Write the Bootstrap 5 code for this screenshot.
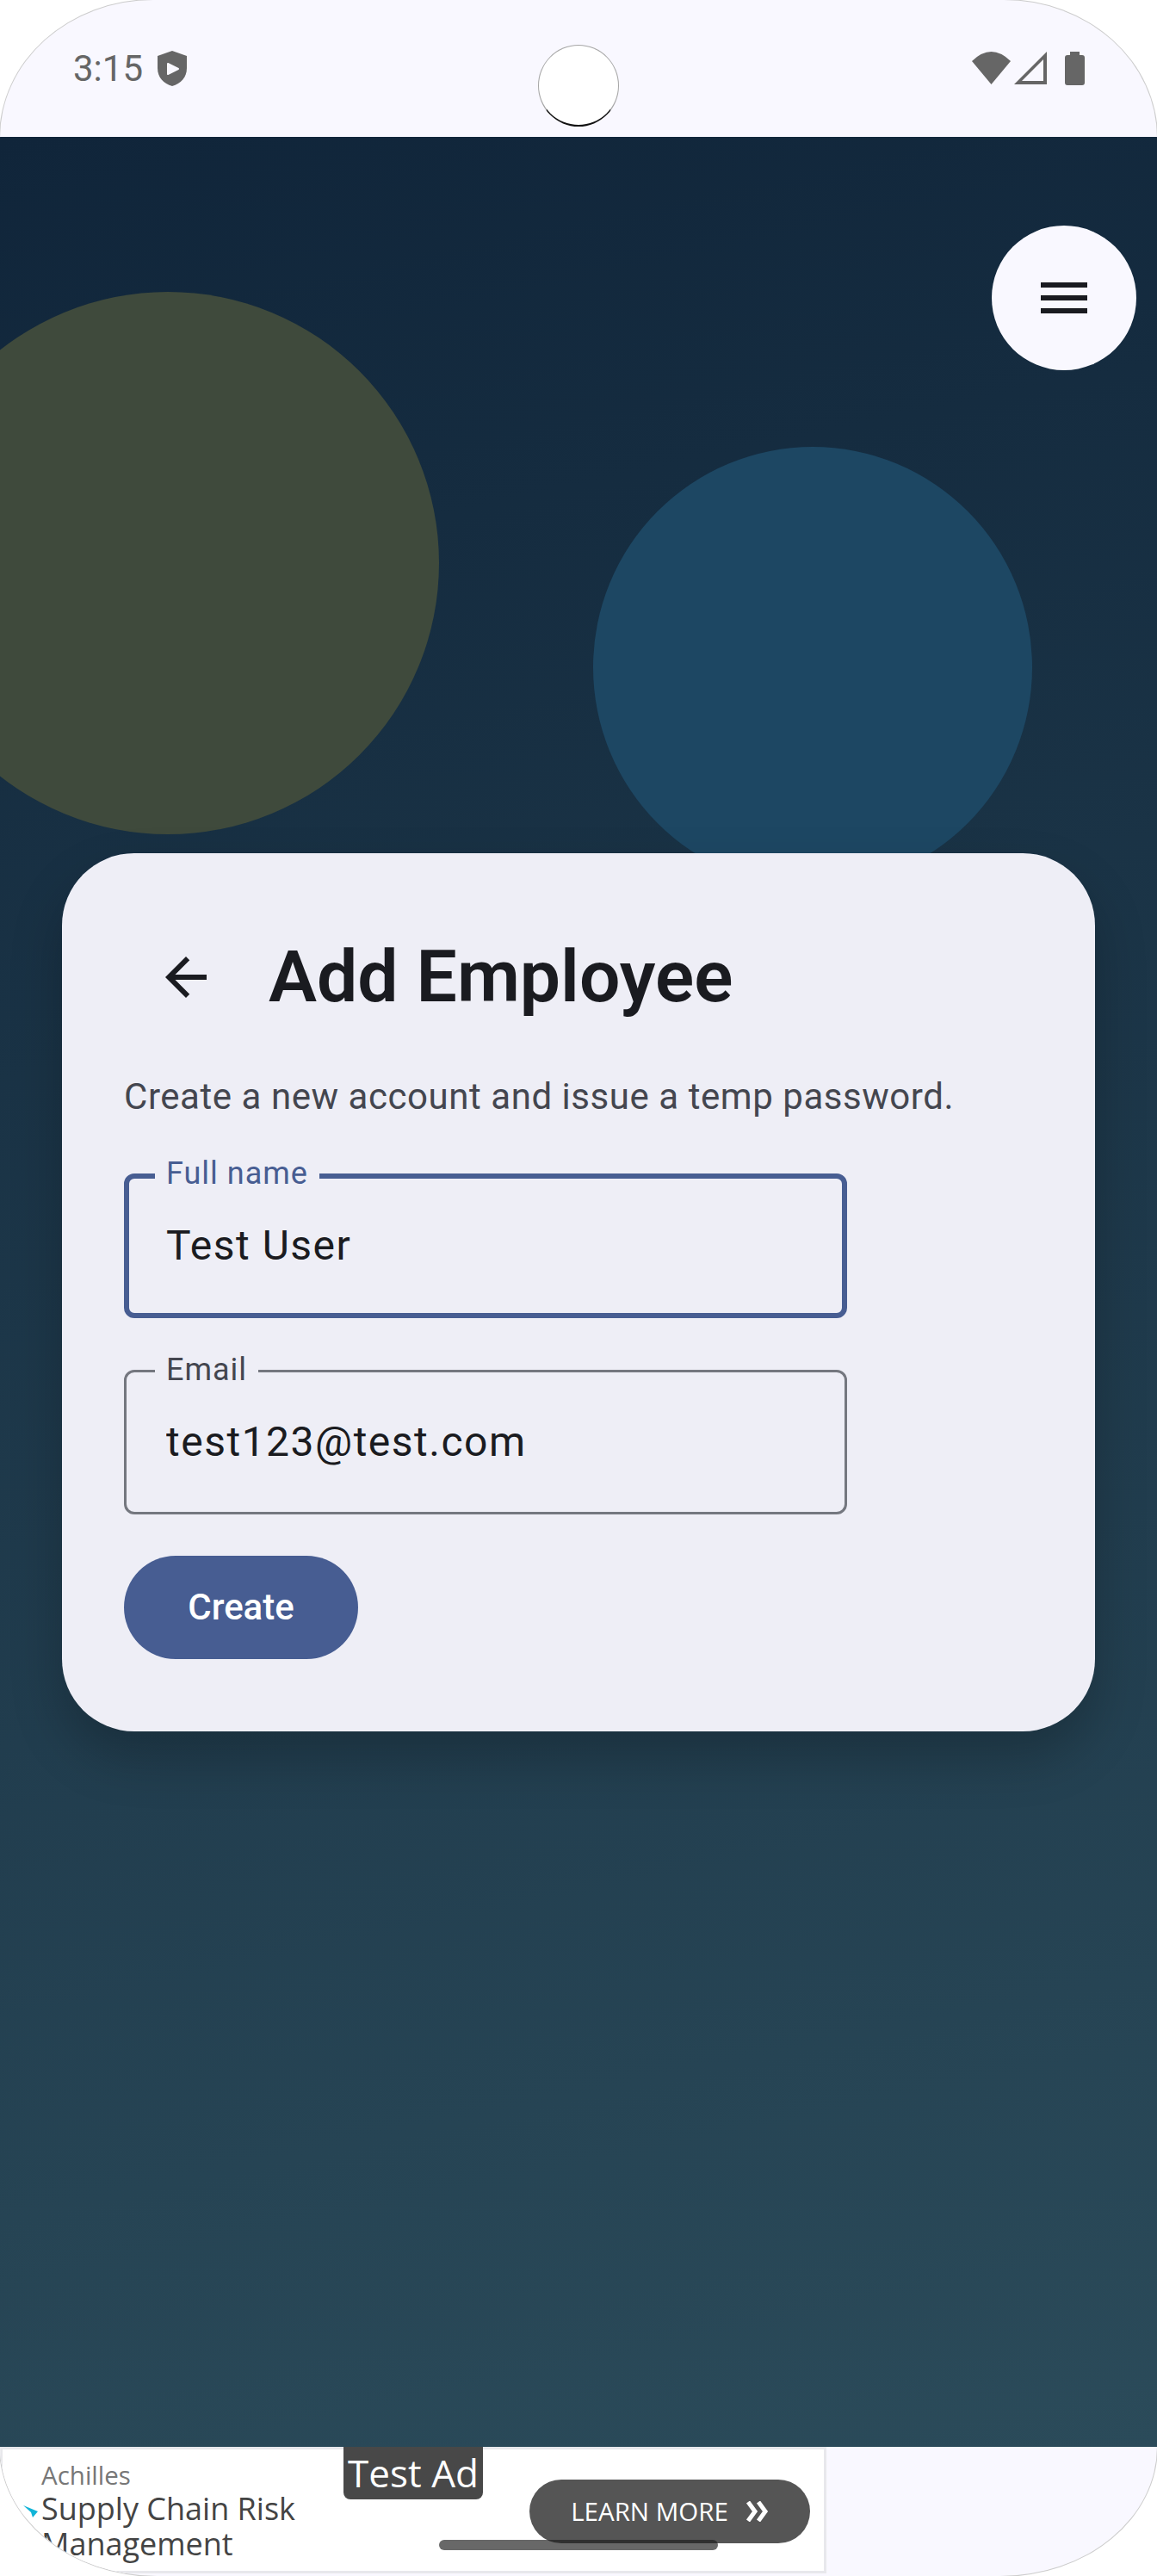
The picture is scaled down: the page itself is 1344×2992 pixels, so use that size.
<!DOCTYPE html>
<html lang="en">
<head>
  <meta charset="UTF-8">
  <meta name="viewport" content="width=device-width, initial-scale=1.0">
  <title>Add Employee</title>
  <link href="https://cdn.jsdelivr.net/npm/bootstrap@5.3.0/dist/css/bootstrap.min.css" rel="stylesheet">
  <style>
    body {
      margin: 0;
      width: 1344px;
      height: 2992px;
      background: #fff;
      font-family: Roboto, sans-serif;
      overflow: hidden;
    }

    .device {
      position: relative;
      width: 1344px;
      height: 2992px;
      overflow: hidden;
      background: #f9f8ff;
      border-radius: 178px 178px 182px 182px / 160px 160px 150px 150px;
      box-shadow: 0 0 0 1px rgba(0, 0, 0, .2);
    }

    .status-row {
      height: 159px;
      padding: 0 84px 0 85px;
      color: #666;
    }

    .status-left { gap: 17px; }
    .clock { font-size: 42px; line-height: 1; }

    .camera-hole {
      position: absolute;
      left: 625px;
      top: 52px;
      width: 94px;
      height: 95px;
      border-radius: 50%;
      background: #fff;
      border: 1px solid rgba(0, 0, 0, .35);
      border-bottom: 2px solid #111;
    }

    .hero {
      position: relative;
      height: 2683px;
      overflow: hidden;
      background: linear-gradient(168deg, #10253a, #2b4b5a);
    }

    .blob { position: absolute; border-radius: 50%; }
    .blob-olive { left: -120px; top: 180px; width: 630px; height: 630px; background: #3f4a3c; }
    .blob-blue { left: 689px; top: 360px; width: 510px; height: 512px; background: #1d4763; }

    .menu-fab {
      position: absolute;
      left: 1152px;
      top: 103px;
      width: 168px;
      height: 168px;
      border: 0;
      background: #f9f8ff;
      gap: 9px;
    }

    .menu-fab span { display: block; width: 54px; height: 6px; background: #1a1b20; }

    .form-sheet {
      width: 1200px;
      height: 1020px;
      padding: 72px;
      border: 0;
      border-radius: 84px;
      background: #eeeef6;
      box-shadow: 0 30px 60px rgba(0, 0, 0, .22);
    }

    .back-btn { width: 144px; height: 144px; padding: 0; border: 0; }
    .sheet-title { font-size: 84px; font-weight: 600; color: #1a1b20; margin: 0 0 0 24px; line-height: 144px; }
    .sheet-sub { font-size: 42px; letter-spacing: .55px; color: #44464f; margin: 37px 0 59px; line-height: 60px; }

    .field { position: relative; width: 840px; height: 168px; margin-bottom: 60px; }
    .field-label {
      position: absolute;
      left: 36px;
      top: -22px;
      padding: 0 13px;
      font-size: 36px;
      line-height: 44px;
      letter-spacing: 1px;
      background: #eeeef6;
      color: #44464f;
    }
    .field-input.form-control {
      height: 168px;
      padding: 0 46px;
      font-size: 48px;
      letter-spacing: 1.5px;
      color: #1a1b20;
      background: transparent;
      border: 3px solid #74777f;
      border-radius: 12px;
      box-shadow: none;
    }
    .field-active .field-label { color: #475d92; }
    .field-active .field-input.form-control { border: 6px solid #475d92; padding: 0 43px; }

    .create-btn {
      width: 272px;
      height: 120px;
      margin-top: -12px;
      padding: 0;
      border: 0;
      font-size: 42px;
      font-weight: 500;
      color: #fff;
      background: #475d92;
    }

    .ad-bar { height: 150px; }
    .ad-box {
      position: relative;
      width: 960px;
      height: 147px;
      background: #fff;
      border: 3px solid #e8e8ec;
      font-family: "Open Sans", sans-serif;
    }
    .ad-copy { padding: 12px 0 0 45px; width: 400px; }
    .ad-brand { font-size: 29.5px; line-height: 36px; color: #777; }
    .ad-head { font-size: 36px; line-height: 41px; color: #444; }
    .ad-tag {
      position: absolute;
      left: 396px;
      top: -3px;
      width: 162px;
      height: 61px;
      background: #484848;
      border-radius: 0 0 8px 8px;
      color: #fff;
      font-size: 44px;
      line-height: 60px;
      text-align: center;
      white-space: nowrap;
    }
    .ad-btn {
      position: absolute;
      left: 612px;
      top: 35px;
      width: 326px;
      height: 74px;
      gap: 20px;
      padding: 0;
      border: 0;
      font-size: 29.5px;
      color: #fff;
      background: #555;
    }
    .ad-mark { position: absolute; left: 24px; top: 65px; }

    .home-pill {
      position: absolute;
      left: 510px;
      top: 2950px;
      width: 324px;
      height: 12px;
      border-radius: 6px;
      background: rgba(30, 30, 30, .67);
    }
  </style>
</head>
<body>

  <div class="device d-flex flex-column">
    <div class="status-row d-flex justify-content-between align-items-center">
      <div class="status-left d-flex align-items-center">
        <span class="clock">3:15</span>
        <svg width="34" height="41" viewBox="0 0 34 41"><path fill="#666" d="M17 0 34 6V20C34 31 27 38 17 41 7 38 0 31 0 20V6Z"/><path fill="#f9f8ff" stroke="#f9f8ff" stroke-width="2" stroke-linejoin="round" d="M12 15 24 21 12 27Z"/></svg>
      </div>
      <div class="d-flex align-items-center gap-0">
        <svg width="45" height="39" viewBox="0 0 45 39"><path fill="#666" d="M0 11Q22.5-11 45 11L22.5 38Z"/></svg>
        <svg class="ms-1" width="38" height="39" viewBox="0 0 38 39"><path fill="#666" fill-rule="evenodd" d="M0 38 38 0V38ZM9 34H34V9Z"/></svg>
        <svg style="margin-left:21px" width="23" height="39" viewBox="0 0 23 39"><path fill="#666" d="M6 0H17V4H20Q23 4 23 7V36Q23 39 20 39H3Q0 39 0 36V7Q0 4 3 4H6Z"/></svg>
      </div>
    </div>
    <div class="camera-hole"></div>

    <div class="hero d-flex justify-content-center align-items-center">
      <div class="blob blob-olive"></div>
      <div class="blob blob-blue"></div>
      <button class="menu-fab btn rounded-circle d-flex flex-column justify-content-center align-items-center" type="button" aria-label="Menu">
        <span></span><span></span><span></span>
      </button>

      <div class="form-sheet card position-relative">
        <div class="d-flex align-items-center">
          <button class="back-btn btn d-flex justify-content-center align-items-center" type="button" aria-label="Back">
            <svg width="72" height="72" viewBox="0 0 24 24"><path fill="#1a1b20" d="M20 11H7.83l5.59-5.59L12 4l-8 8 8 8 1.41-1.41L7.83 13H20v-2z"/></svg>
          </button>
          <h1 class="sheet-title">Add Employee</h1>
        </div>
        <p class="sheet-sub">Create a new account and issue a temp password.</p>
        <div class="field field-active">
          <label class="field-label" for="fullName">Full name</label>
          <input id="fullName" class="field-input form-control" type="text" value="Test User">
        </div>
        <div class="field">
          <label class="field-label" for="email">Email</label>
          <input id="email" class="field-input form-control" type="text" value="test123@test.com">
        </div>
        <button class="create-btn btn rounded-pill" type="button">Create</button>
      </div>
    </div>

    <div class="ad-bar">
      <div class="ad-box d-flex">
        <svg class="ad-mark" width="20" height="16" viewBox="0 0 20 16"><path fill="#12b5d8" d="M0 0 17 7 11 14 9 8Z"/></svg>
        <div class="ad-copy">
          <div class="ad-brand">Achilles</div>
          <div class="ad-head">Supply Chain Risk Management</div>
        </div>
        <div class="ad-tag">Test Ad</div>
        <button class="ad-btn btn rounded-pill d-flex justify-content-center align-items-center" type="button">
          LEARN MORE
          <svg width="27" height="24" viewBox="0 0 27 24"><path fill="none" stroke="#fff" stroke-width="5" d="M3 1 11 12 3 23M15 1 23 12 15 23"/></svg>
        </button>
      </div>
    </div>

    <div class="home-pill"></div>
  </div>

  <script src="https://cdn.jsdelivr.net/npm/bootstrap@5.3.0/dist/js/bootstrap.bundle.min.js"></script>
</body>
</html>
